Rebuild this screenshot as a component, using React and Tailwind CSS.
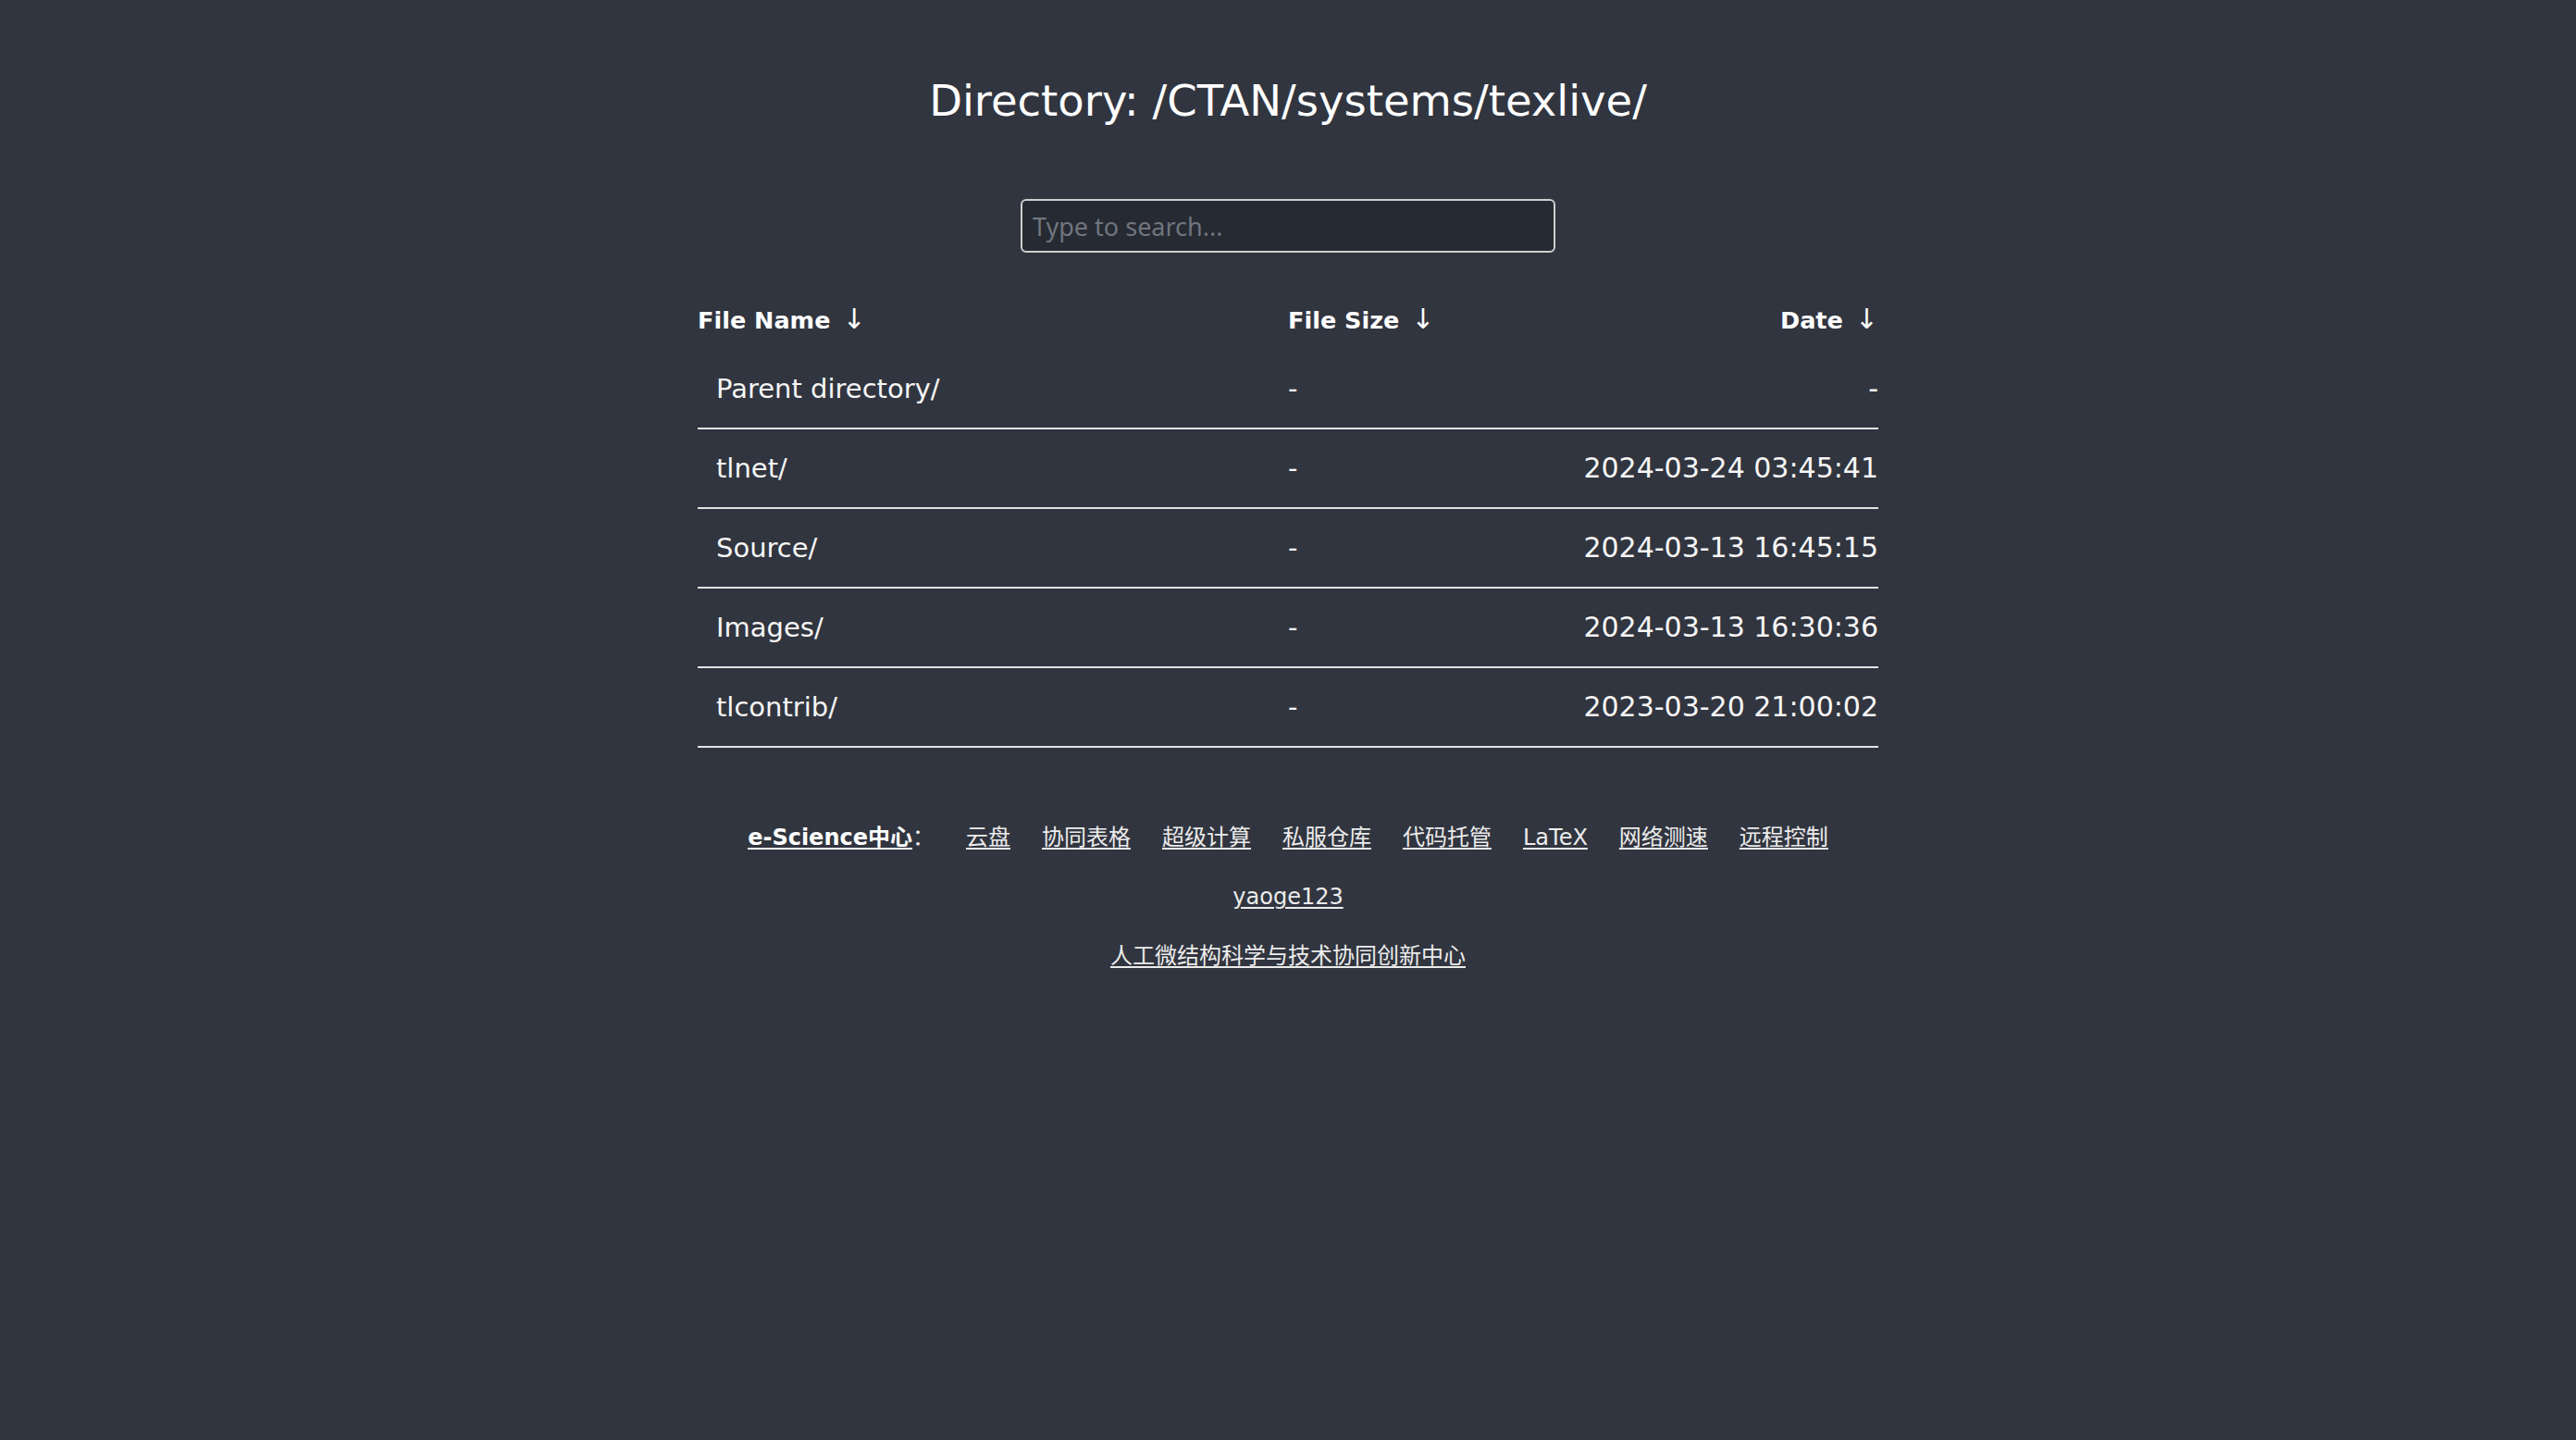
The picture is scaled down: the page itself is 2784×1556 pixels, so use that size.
const rows = [
  { name: 'Parent directory/', size: '-', date: '-' },
  { name: 'tlnet/', size: '-', date: '2024-03-24 03:45:41' },
  { name: 'Source/', size: '-', date: '2024-03-13 16:45:15' },
  { name: 'Images/', size: '-', date: '2024-03-13 16:30:36' },
  { name: 'tlcontrib/', size: '-', date: '2023-03-20 21:00:02' },
];

const links = ['云盘', '协同表格', '超级计算', '私服仓库', '代码托管', 'LaTeX', '网络测速', '远程控制'];

const Arrow = () => <span className="ml-[13px] text-[30px] leading-none font-normal">↓</span>;

export default function App() {
  return (
    <div className="min-h-screen bg-[#31353f] text-white font-['DejaVu_Sans','Noto_Sans_CJK_SC',sans-serif]">
      <h1 className="pt-[82px] text-center text-[46.5px] leading-[54px] font-normal">
        Directory: /CTAN/systems/texlive/
      </h1>

      <div className="mt-[79px] flex justify-center">
        <input
          type="text"
          placeholder="Type to search..."
          className="w-[578px] h-[58px] rounded-[6px] border-2 border-[#cfcfcf] bg-[#262a33] px-[11px] text-[27px] text-white font-['Noto_Sans',sans-serif] placeholder:text-[#70757e] outline-none"
        />
      </div>

      <div className="mx-auto mt-[43px] w-[1276px]">
        <div className="grid h-[62px] grid-cols-[638px_1fr_1fr] items-center pb-[3px] text-[25.5px] leading-[30px] font-bold">
          <div>File Name<Arrow /></div>
          <div>File Size<Arrow /></div>
          <div className="text-right">Date<Arrow /></div>
        </div>
        {rows.map((r) => (
          <div
            key={r.name}
            className="grid grid-cols-[638px_1fr_1fr] items-baseline border-b-2 border-[#e2e2e2] py-[25px] text-[29px] leading-[34px] text-[#f6f6f6]"
          >
            <div className="pl-[20px]">{r.name}</div>
            <div>{r.size}</div>
            <div className="text-right text-[30px]">{r.date}</div>
          </div>
        ))}
      </div>

      <div className="mt-[79px] flex flex-col items-center gap-[28px] text-[24px] leading-[36px] text-[#ececec]">
        <div className="flex items-baseline gap-[34px]">
          <span>
            <a href="#" className="font-bold text-white underline decoration-2 underline-offset-[3px]">e-Science中心</a>
            ：
          </span>
          {links.map((l) => (
            <a key={l} href="#" className="underline decoration-2 underline-offset-[3px]">{l}</a>
          ))}
        </div>
        <div>
          <a href="#" className="underline decoration-2 underline-offset-[3px]">yaoge123</a>
        </div>
        <div>
          <a href="#" className="underline decoration-2 underline-offset-[3px]">人工微结构科学与技术协同创新中心</a>
        </div>
      </div>
    </div>
  );
}
